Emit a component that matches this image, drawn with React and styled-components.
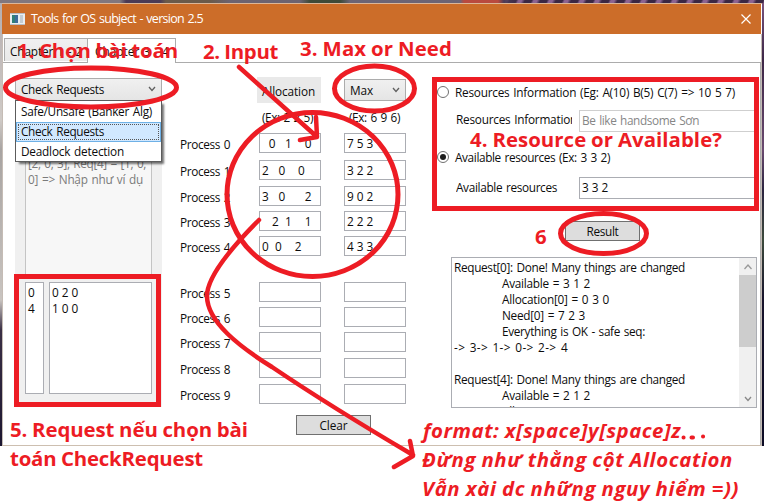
import React, { useLayoutEffect, useRef, useState } from "react";
import styled, { createGlobalStyle, css } from "styled-components";

const RED = "#ed1c24";

const GlobalStyle = createGlobalStyle`
  * { box-sizing: border-box; }
  body { margin: 0; background: #fff; }
`;

const Page = styled.main`
  position: relative;
  width: 774px;
  height: 502px;
  overflow: hidden;
  background: #fff;
  color: #0c0c0c;
  font: 11.8px/16px "Open Sans", "Noto Sans", sans-serif;
`;

const Desktop = styled.div`
  width: 764px;
  height: 446px;
  padding: 3px 2px 0 2px;
  background:
    linear-gradient(90deg, #81777d 0 120px, #4b3a55 126px 160px, #6b5a4a 166px 210px, #6c6371 230px 300px, #3e4a38 310px 340px, #6d6474 350px 460px, #b94a3f 464px 498px, #4a3b55 504px, transparent 520px) 0 0 / 764px 3px no-repeat,
    repeating-linear-gradient(115deg, #3a2743 0 6px, #8b6391 8px 11px, #3a2743 14px) 0 0 / 764px 3px no-repeat,
    linear-gradient(#b5aeb0, #cfcac6 120px, #a8a4a2 150px, #c9c4c0 300px, #3a2f45 330px, #1c1630) 0 0 / 3px 446px no-repeat,
    linear-gradient(#7c5680, #3d2747 60px, #6a4a70 150px, #2b2440 190px, #3c4a3c 240px, #17132c 300px, #0b0a24) 100% 0 / 3px 446px no-repeat;
`;

const Window = styled.section`
  height: 443px;
  background: #fff;
  border-top: 1px solid #dcb698;
  border-bottom: 1px solid #cdbfb0;
`;

const TitleBar = styled.header`
  display: flex;
  align-items: center;
  height: 30px;
  width: 759px;
  padding: 0 10px 0 8px;
  background: #cc6d29;
  color: #fff;
  font-size: 12.5px;
  gap: 6px;
  svg:last-child { margin-left: auto; }
`;

const Client = styled.div`
  height: 411px;
  border: solid #c5bcb5;
  border-width: 0 1px;
`;

const Tabs = styled.nav`
  display: flex;
  align-items: flex-start;
  height: 28px;
  padding: 4px 0 0 1px;
`;

const Tab = styled.div`
  position: relative;
  height: ${(p) => (p.$active ? 25 : 23)}px;
  width: ${(p) => (p.$active ? 89 : 83)}px;
  padding: ${(p) => (p.$active ? "4px 0 0 7px" : "4px 0 0 5px")};
  border: 1px solid #acacac;
  border-bottom: 0;
  ${(p) => !p.$active && css`border-right: 0;`}
  background: ${(p) => (p.$active ? "#fff" : "linear-gradient(#f0f0f0, #e9e9e9)")};
  white-space: nowrap;
`;

const Pane = styled.div`
  display: flex;
  align-items: flex-start;
  width: 758px;
  height: 383px;
  padding: 14px 0 0 12px;
  border-top: 1px solid #acacac;
  border-right: 1px solid #acacac;
`;

const RequestColumn = styled.div`
  position: relative;
  width: 147px;
  padding-top: 1px;
`;

const Combo = styled.div`
  display: flex;
  align-items: center;
  justify-content: space-between;
  height: ${(p) => p.$height}px;
  width: ${(p) => p.$width}px;
  padding: 0 5px 1px 5px;
  border: 1px solid #acacac;
  background: linear-gradient(#f0f0f0, #e5e5e5);
`;

const RequestPanel = styled.div`
  height: 306px;
  padding: 0 10px;
  background: #f0f0f0;
`;

const Hint = styled.div`
  height: 176px;
  padding: 54px 2px 0;
  border: 1px solid #c4c4c4;
  border-top: 0;
  background: #f7f7f7;
  color: #7b7b7b;
`;

const RequestInputs = styled.div`
  display: grid;
  grid-template-columns: 19px 103px;
  gap: 5px;
  padding-top: 5px;
`;

const Field = styled.div`
  height: ${(p) => p.$height || 20}px;
  padding: ${(p) => p.$pad || "1px 2px"};
  border: 1px solid ${(p) => (p.$muted ? "#cfcfcf" : "#abadb3")};
  background: #fff;
  color: ${(p) => (p.$muted ? "#868686" : "#0c0c0c")};
  letter-spacing: ${(p) => (p.$digits ? "-0.3px" : "0")};
  word-spacing: ${(p) => (p.$digits ? "0.55px" : "0")};
  white-space: pre;
  overflow: hidden;
`;

const Menu = styled.ul`
  position: absolute;
  top: 23px;
  left: 0;
  width: 147px;
  height: 62px;
  margin: 0;
  padding: 1px 0;
  list-style: none;
  border: 1px solid #5c5c5c;
  background: #fff;
  box-shadow: 3px 3px 2px -1px rgba(0, 0, 0, 0.55);
`;

const MenuItem = styled.li`
  height: 20px;
  padding: ${(p) => (p.$selected ? "0 4px" : "1px 5px")};
  ${(p) => p.$selected && css`
    border: 1px solid #6fb1e6;
    background: #d1e8ff;
    outline: 1px dotted #555;
    outline-offset: -3px;
  `}
`;

const MatrixColumn = styled.div`
  width: 226px;
  margin-left: 18px;
`;

const MatrixHeader = styled.div`
  display: flex;
  gap: 23px;
  height: 26px;
  padding-left: 77px;
  align-items: center;
`;

const AllocationCaption = styled.div`
  width: 64px;
  height: 26px;
  padding: 6px 0 0 5px;
  background: #e9e9e9;
`;

const Examples = styled.div`
  display: flex;
  align-items: flex-start;
  gap: 36px;
  height: 30px;
  padding: 6px 0 0 82px;
`;

const MatrixRow = styled.div`
  display: grid;
  grid-template-columns: 79px 62px 62px;
  height: 20px;
  margin-top: ${(p) => p.$gap}px;
  ${Field}:last-child { margin-left: 23px; width: 62px; }
`;

const RowLabel = styled.div`
  padding-top: 3px;
`;

const Button = styled.button`
  display: flex;
  align-items: center;
  justify-content: center;
  width: 75px;
  height: 20px;
  margin: ${(p) => p.$margin};
  padding: 0;
  border: 1px solid #707070;
  background: #ddd;
  color: #0c0c0c;
  font: inherit;
`;

const ResultColumn = styled.div`
  width: 320px;
  margin-left: 31px;
  padding-top: 7px;
`;

const Option = styled.div`
  display: flex;
  align-items: center;
  gap: 6px;
  height: 16px;
  white-space: nowrap;
`;

const Radio = styled.span`
  display: grid;
  place-items: center;
  width: 12px;
  height: 12px;
  border: 1px solid #707070;
  border-radius: 50%;
  background: #fff;
  &::after {
    content: "";
    width: 6px;
    height: 6px;
    border-radius: 50%;
    background: ${(p) => (p.$checked ? "#1c1c1c" : "transparent")};
  }
`;

const FieldRow = styled.div`
  display: grid;
  grid-template-columns: 116px 178px;
  column-gap: 7px;
  align-items: start;
  margin: ${(p) => p.$margin};
  padding-left: 19px;
`;

const FieldLabel = styled.div`
  padding-top: ${(p) => p.$top}px;
  overflow: hidden;
  white-space: nowrap;
`;

const Output = styled.div`
  display: flex;
  justify-content: space-between;
  width: 306px;
  height: 151px;
  margin: 16px 0 0 14px;
  border: 1px solid #abadb3;
  overflow: hidden;
`;

const Log = styled.div`
  padding: 1px 0 0 2px;
  height: 149px;
  overflow: hidden;
`;

const LogLine = styled.div`
  height: 16px;
  padding-left: ${(p) => (p.$indent ? 48 : 0)}px;
`;

const Scrollbar = styled.div`
  display: flex;
  flex-direction: column;
  justify-content: space-between;
  width: 17px;
  height: 149px;
  background: #f0f0f0;
`;

const ScrollArrow = styled.div`
  display: grid;
  place-items: center;
  height: 17px;
`;

const Thumb = styled.div`
  height: 72px;
  margin-bottom: 43px;
  background: #cdcdcd;
`;

const FitText = styled.span`
  display: inline-block;
  white-space: pre;
  word-spacing: ${(p) => p.$gap}px;
`;

const Note = styled.div`
  position: absolute;
  left: ${(p) => p.$x}px;
  top: ${(p) => p.$baseline - 20}px;
  color: ${RED};
  font: ${(p) => (p.$italic ? "italic" : "normal")} 700 20.4px/26px "Open Sans", "Noto Sans", sans-serif;
  white-space: nowrap;
`;

const Ink = styled.svg`
  position: absolute;
  inset: 0;
`;

/* Adjusts the letter spacing so that a text takes exactly `w` pixels. */
function Fit({ w, gap = 1, children }) {
  const ref = useRef(null);
  const [spacing, setSpacing] = useState(0);
  useLayoutEffect(() => {
    const natural = ref.current.getBoundingClientRect().width;
    setSpacing((w - natural) / children.length);
  }, [w, children]);
  return <FitText ref={ref} $gap={gap} style={{ letterSpacing: `${spacing}px` }}>{children}</FitText>;
}

function Chevron({ up, color = "#606060" }) {
  return (
    <svg width="8" height="8" viewBox="0 0 8 8" fill="none" stroke={color} strokeWidth="1.3">
      <path d={up ? "M.5 6 4 2 7.500 6" : "M1 2 4 5.500 7 2"} />
    </svg>
  );
}

const ROWS = [
  [0, "  0   1    0", "7 5 3"],
  [7, "2   0    0", "3 2 2"],
  [6, "3   0      2", "9 0 2"],
  [5, "   2  1    1", "2 2 2"],
  [5, "0  0    2", "4 3 3"],
  [26, "", ""],
  [5, "", ""],
  [5, "", ""],
  [6, "", ""],
  [6, "", ""],
];

const LOG = [
  [0, 231, "Request[0]: Done! Many things are changed"],
  [1, 88, "Available = 3 1 2"],
  [1, 107, "Allocation[0] = 0 3 0"],
  [1, 83, "Need[0] = 7 2 3"],
  [1, 143, "Everything is OK - safe seq:"],
  [0, 114, "-> 3-> 1-> 0-> 2-> 4"],
  [0, 4, " "],
  [0, 231, "Request[4]: Done! Many things are changed"],
  [1, 88, "Available = 2 1 2"],
  [1, 107, "Allocation[4] = 1 0 2"],
];

const NOTES = [
  [17, 57, 161, "1. Chọn bài toán"],
  [203, 58, 75, "2. Input"],
  [300, 55, 152, "3. Max or Need"],
  [470, 146, 252, "4. Resource or Available?"],
  [535, 243, 12, "6"],
  [10, 436, 238, "5. Request nếu chọn bài"],
  [10, 465, 193, "toán CheckRequest"],
  [423, 437, 258, "format: x[space]y[space]z", true],
  [422, 466, 311, "Đừng như thằng cột Allocation", true],
  [422, 495, 317, "Vẫn xài dc những nguy hiểm =))", true],
];

export default function App() {
  return (
    <Page>
      <GlobalStyle />
      <Desktop>
        <Window>
          <TitleBar>
            <svg width="15" height="12" viewBox="0 0 15 12">
              <path fill="#e9edf0" d="M0 0h15v12H0z" />
              <path fill="#b6bcc4" d="M0 0h15v1H0zM0 11h15v1H0z" />
              <path fill="#2f7f78" d="M2 2h6v8H2z" />
              <path fill="#3c6c9a" d="M5 2h3v8H5z" />
              <path fill="#c3ccd3" d="M10 2h3v8h-3z" />
            </svg>
            <Fit w={172}>Tools for OS subject - version 2.5</Fit>
            <svg width="10" height="10" viewBox="0 0 10 10" stroke="#fff" strokeWidth="1.2">
              <path d="M.5.5l9 9M9.500.5l-9 9" />
            </svg>
          </TitleBar>
          <Client>
            <Tabs>
              <Tab><Fit w={72}>Chapter 1 - 2</Fit></Tab>
              <Tab $active><Fit w={74}>Chapter 3 - 4</Fit></Tab>
            </Tabs>
            <Pane>
              <RequestColumn>
                <Combo $width={147} $height={23}>
                  <Fit w={83}>Check Requests</Fit>
                  <Chevron />
                </Combo>
                <RequestPanel>
                  <Hint>
                    <Fit w={118}>[2, 0, 3], Req[4] = [1, 0,</Fit>
                    <Fit w={115}>{"0] => Nhập như ví dụ"}</Fit>
                  </Hint>
                  <RequestInputs>
                    <Field $height={112} $digits>{"0\n4"}</Field>
                    <Field $height={112} $digits>{"0 2 0\n1 0 0"}</Field>
                  </RequestInputs>
                </RequestPanel>
                <Menu>
                  <MenuItem><Fit w={131}>Safe/Unsafe (Banker Alg)</Fit></MenuItem>
                  <MenuItem $selected><Fit w={83}>Check Requests</Fit></MenuItem>
                  <MenuItem><Fit w={103}>Deadlock detection</Fit></MenuItem>
                </Menu>
              </RequestColumn>

              <MatrixColumn>
                <MatrixHeader>
                  <AllocationCaption><Fit w={53}>Allocation</Fit></AllocationCaption>
                  <Combo $width={62} $height={22}>
                    <Fit w={23}>Max</Fit>
                    <Chevron />
                  </Combo>
                </MatrixHeader>
                <Examples>
                  <Fit w={51}>(Ex: 2 2 5)</Fit>
                  <Fit w={51}>(Ex: 6 9 6)</Fit>
                </Examples>
                {ROWS.map(([gap, allocation, max], i) => (
                  <MatrixRow key={i} $gap={gap}>
                    <RowLabel><Fit w={50}>{`Process ${i}`}</Fit></RowLabel>
                    <Field $digits>{allocation}</Field>
                    <Field $digits>{max}</Field>
                  </MatrixRow>
                ))}
                <Button $margin="11px 0 0 116px"><Fit w={28}>Clear</Fit></Button>
              </MatrixColumn>

              <ResultColumn>
                <Option>
                  <Radio />
                  <Fit w={280}>{"Resources Information (Eg: A(10) B(5) C(7) => 10 5 7)"}</Fit>
                </Option>
                <FieldRow $margin="10px 0 17px">
                  <FieldLabel $top={1}><Fit w={121}>Resources Information</Fit></FieldLabel>
                  <Field $height={22} $pad="1px 2px" $muted><Fit w={117}>Be like handsome Sơn</Fit></Field>
                </FieldRow>
                <Option>
                  <Radio $checked />
                  <Fit w={155}>Available resources (Ex: 3 3 2)</Fit>
                </Option>
                <FieldRow $margin="12px 0 0">
                  <FieldLabel $top={2}><Fit w={101}>Available resources</Fit></FieldLabel>
                  <Field $height={22} $pad="1px 2px" $digits>3 3 2</Field>
                </FieldRow>
                <Button $margin="22px 0 0 128px"><Fit w={32}>Result</Fit></Button>
                <Output>
                  <Log>
                    {LOG.map(([indent, w, text], i) => (
                      <LogLine key={i} $indent={indent}><Fit w={w}>{text}</Fit></LogLine>
                    ))}
                  </Log>
                  <Scrollbar>
                    <ScrollArrow><Chevron up color="#999" /></ScrollArrow>
                    <Thumb />
                    <ScrollArrow><Chevron color="#888" /></ScrollArrow>
                  </Scrollbar>
                </Output>
              </ResultColumn>
            </Pane>
          </Client>
        </Window>
      </Desktop>

      <Ink width="774" height="502" fill="none" stroke={RED} strokeWidth="5" strokeLinecap="round" strokeLinejoin="round">
        <ellipse cx="91" cy="87.500" rx="85.500" ry="19.500" />
        <ellipse cx="374.500" cy="88.500" rx="40" ry="22.500" />
        <ellipse cx="312.500" cy="194.500" rx="85.500" ry="82" />
        <ellipse cx="603.500" cy="233.500" rx="43" ry="20" />
        <path strokeLinejoin="miter" d="M16.500 276.500h142v128h-142zM434.500 79.500h322v129h-322z" />
        <path strokeWidth="4.500" d="M239 67 316 136M316 117 317 137 300 140" />
        <path strokeWidth="4.500" d="M259 220C234 245 207 276 207 296C207 322 240 347 272 367C315 396 362 425 413 455M410 441 413 456 394 467" />
        <path strokeWidth="4" d="M683.500 437.500h.1M691.500 437.500h1.500M703 436.500h.1" />
      </Ink>
      {NOTES.map(([x, baseline, w, text, italic]) => (
        <Note key={text} $x={x} $baseline={baseline} $italic={italic}><Fit w={w} gap={-0.5}>{text}</Fit></Note>
      ))}
    </Page>
  );
}
